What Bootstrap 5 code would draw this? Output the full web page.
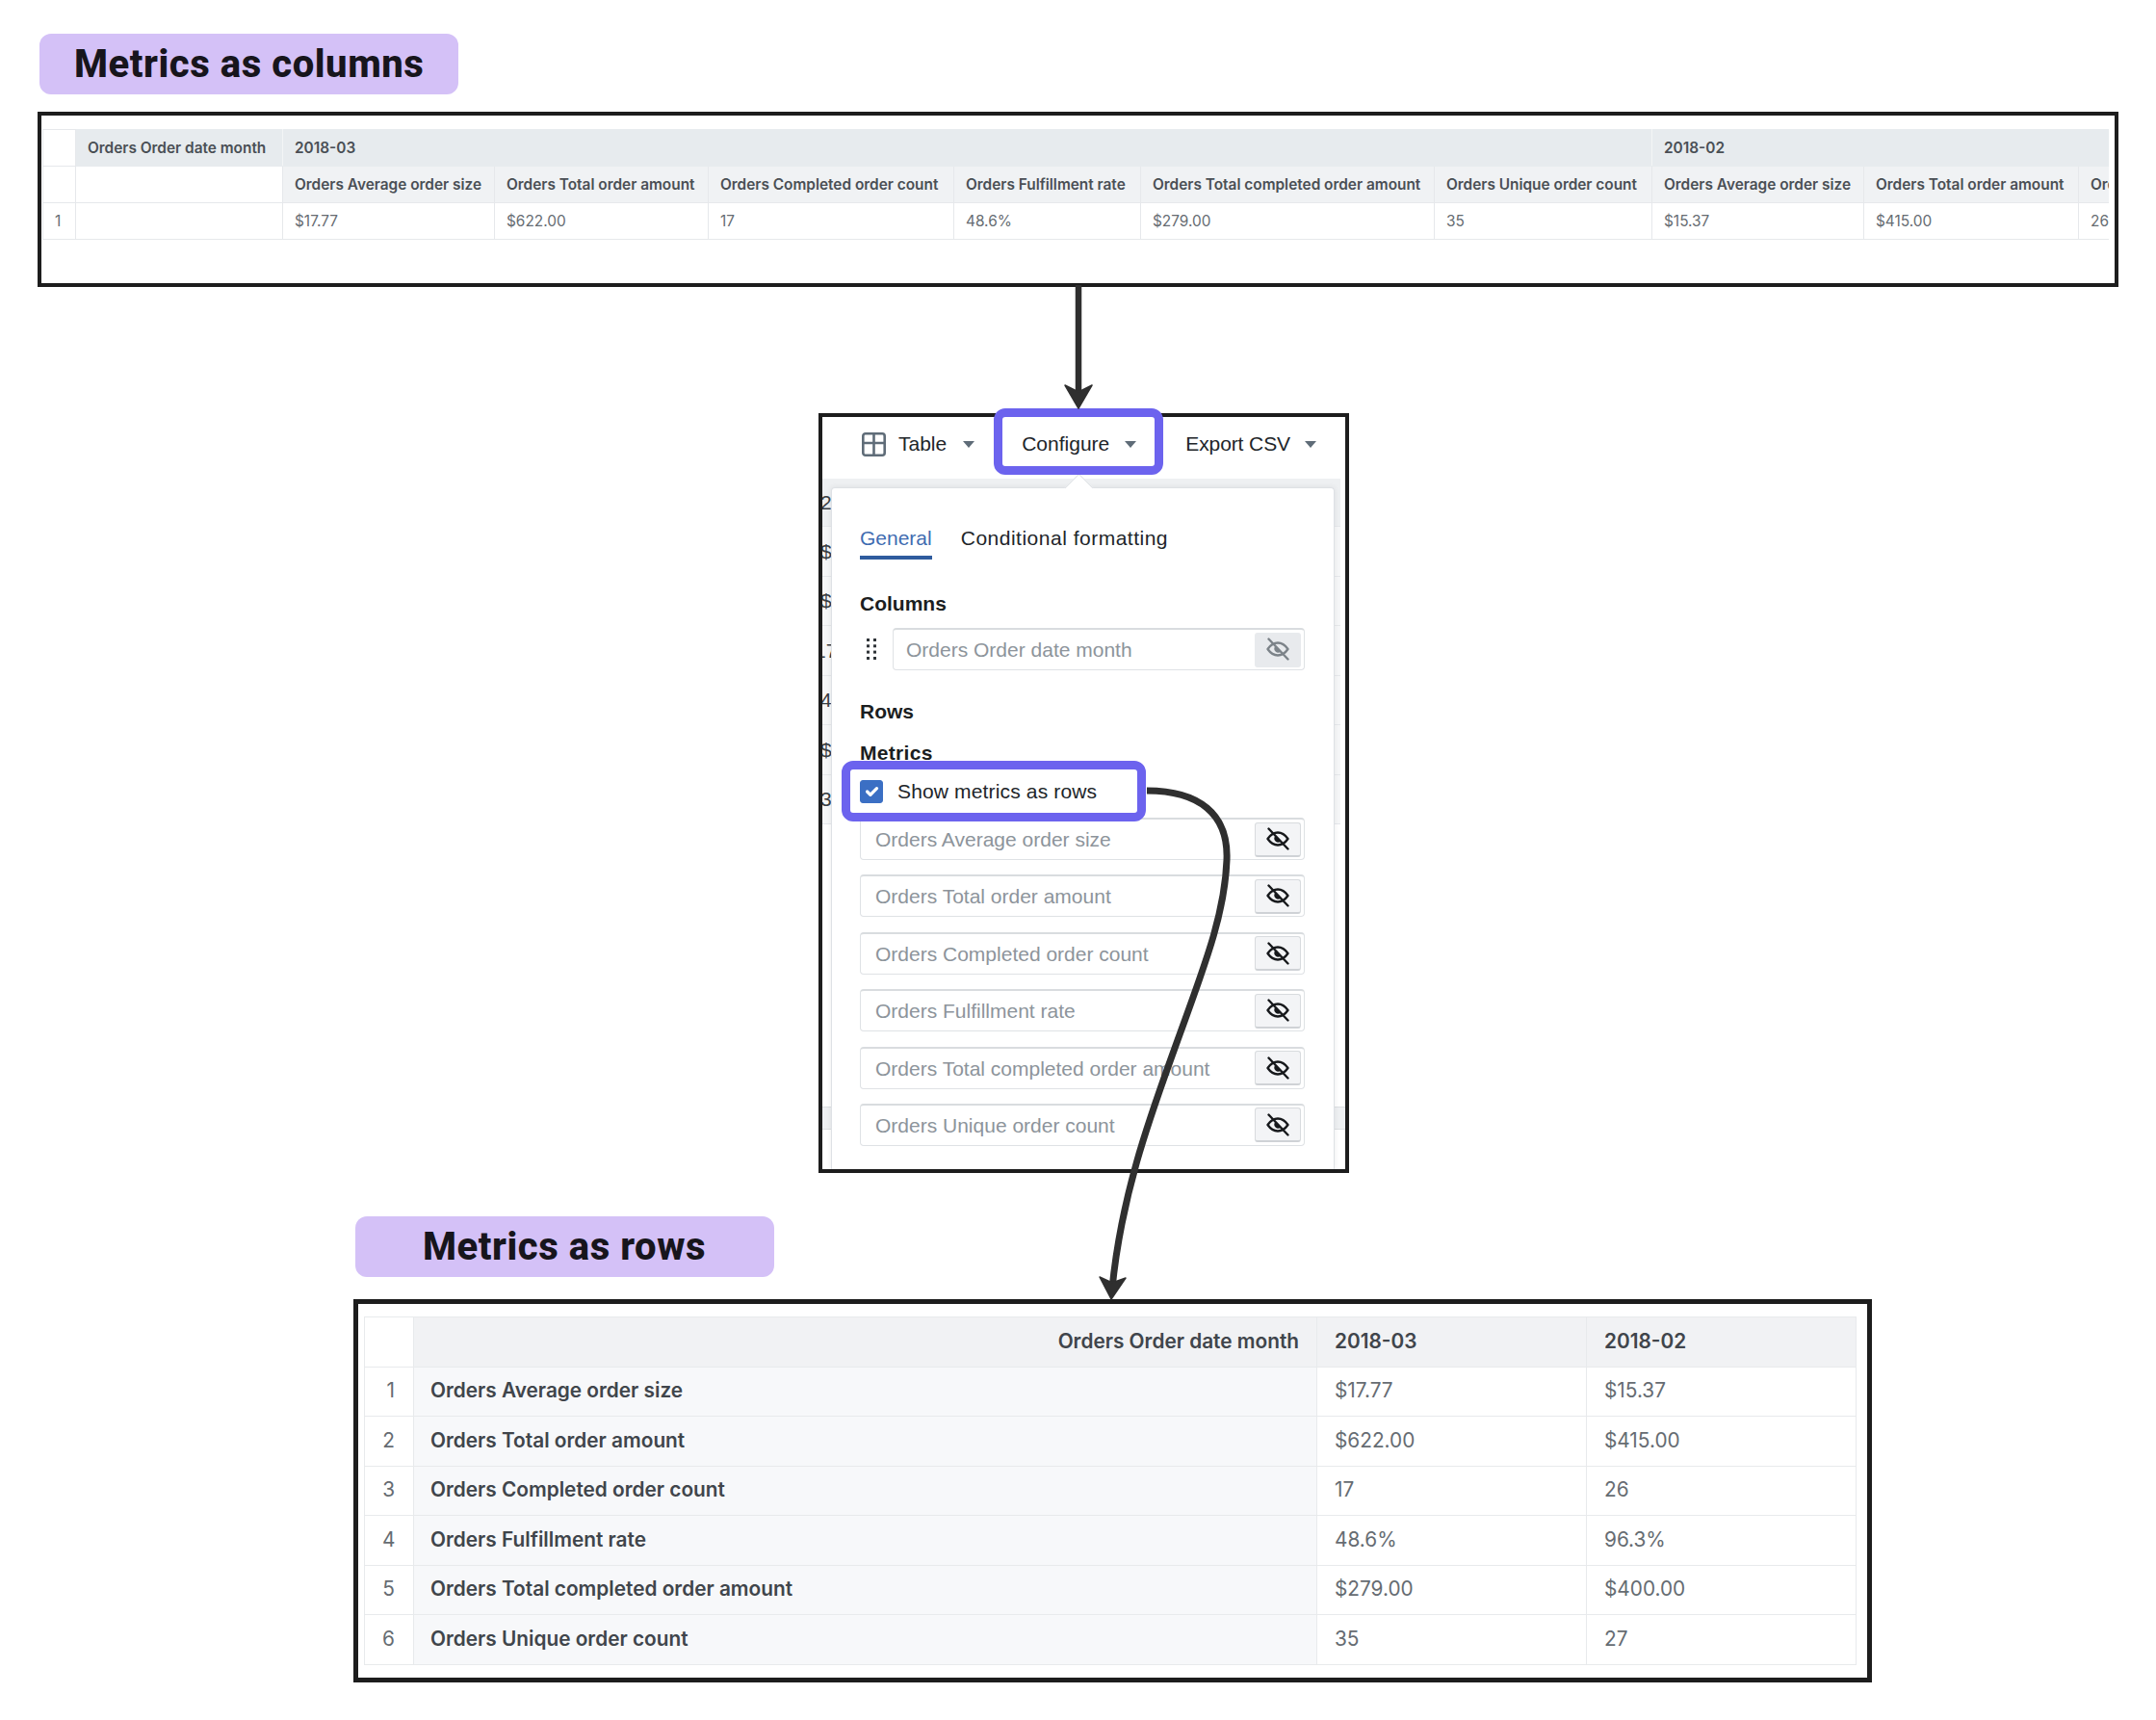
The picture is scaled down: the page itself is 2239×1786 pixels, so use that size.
<!doctype html>
<html lang="en">
<head>
<meta charset="utf-8">
<title>Metrics as columns and rows</title>
<link href="https://cdn.jsdelivr.net/npm/bootstrap@5.3.0/dist/css/bootstrap.min.css" rel="stylesheet">
<style>
html,body{margin:0;background:#fff}
.sheet{position:relative;width:2239px;height:1786px;overflow:hidden;padding-top:35px;font-family:"Liberation Sans",Arial,sans-serif;color:#212529}
.tag-head{display:flex;align-items:center;height:63px;padding-top:1px;background:#d4c1f7;border-radius:12px;font-family:Roboto,sans-serif;font-weight:800;letter-spacing:.55px;font-size:40px;color:#17151c;white-space:nowrap}
.tag-top{width:435px;margin-left:41px;padding-left:36px}
.tag-bottom{width:435px;margin-left:369px;margin-top:45px;padding-left:70px}
.frame{border:4px solid #1d1d1d;background:#fff}
.frame-top{width:2161px;height:182px;margin-left:39px;margin-top:18px;padding:14px 6px 0 1px}
.frame-mid{position:relative;width:551px;height:789px;margin-left:850px;margin-top:131px}
.frame-bottom{width:1577px;height:398px;margin-left:367px;margin-top:23px;padding:13px 0 0 6px;border-width:5px}
.clip{overflow:hidden}
.wide-grid.table,.tall-grid.table{table-layout:fixed;margin:0;font-family:Inter,sans-serif;border-collapse:collapse}
.wide-grid.table{width:2244px;font-size:15.4px}
.wide-grid.table>:not(caption)>*>*{height:38px;padding:1px 12px 0 12px;white-space:nowrap;overflow:hidden;border:1px solid #e6e8eb;background:#fff;color:#666c72;box-shadow:none;vertical-align:middle;line-height:1}
.wide-grid.table>:not(caption)>*>.head-a{background:#e7ebee;color:#4a4f55;font-weight:600;border-color:#e7ebee #f3f5f6}
.wide-grid.table>:not(caption)>*>.head-b{background:#f0f2f4;color:#4a4f55;font-weight:600}
.wide-grid .cw-0{width:34px}.wide-grid .cw-1{width:215px}.wide-grid .cw-2{width:220px}.wide-grid .cw-3{width:222px}.wide-grid .cw-4{width:255px}.wide-grid .cw-5{width:194px}.wide-grid .cw-6{width:305px}.wide-grid .cw-7{width:226px}.wide-grid .cw-8{width:220px}.wide-grid .cw-9{width:223px}.wide-grid .cw-10{width:130px}
.tall-grid.table{width:1549px;font-size:20.8px}
.tall-grid.table>:not(caption)>*>*{height:51.5px;padding:0 18px;white-space:nowrap;border:1px solid #e8eaec;background:#fff;color:#666c72;box-shadow:none;vertical-align:middle;line-height:1}
.tall-grid.table>:not(caption)>*>.num-cell{text-align:right;padding-right:19px}
.tall-grid.table>:not(caption)>*>.top-cell{background:#f1f2f4;color:#40454b;font-weight:600}
.tall-grid.table>:not(caption)>*>.label-cell{background:#f7f8fa;color:#40454b;font-weight:600;padding-left:17px}
.tall-grid .cw-a{width:51px}.tall-grid .cw-b{width:938px}.tall-grid .cw-c{width:280px}.tall-grid .cw-d{width:280px}
.tool-row{height:64px;font-size:21px;padding-left:41px;padding-bottom:8px}
.tool-label{line-height:24px}
.drop-caret{display:inline-block;width:0;height:0;border-left:6px solid transparent;border-right:6px solid transparent;border-top:7px solid #5f6c78;margin-left:17px}
.tool-hi .drop-caret{margin-left:16px}
.tool-last .drop-caret{margin-left:15px}
.tool-icon{width:25px;height:25px;margin-right:13px}
.tool-hi{position:relative;z-index:3;align-self:flex-start;display:flex;align-items:center;height:69px;margin:-9px 0 0 20px;padding:5px 19px 0 20px;border:9px solid #6c63ee;border-radius:12px;background:#fff}
.tool-last{margin-left:23px;letter-spacing:-.1px}
.under{height:717px;overflow:hidden;font-size:21px;color:#3a3f44}
.under-row{width:540px;height:51.5px;background:#f6f7f8;border-bottom:1px solid #e6e8eb;display:flex;align-items:center;margin-left:-2px;line-height:1}
.under-head{height:50px;background:#eef0f2}
.under-wide{padding-left:0;text-indent:-6px}
.under-gap{height:293px}
.under-band{height:24px;background:#eef0f2;border-top:1px solid #dcdfe2;border-bottom:1px solid #dcdfe2}
.pop-panel{position:absolute;left:9px;right:11px;top:73px;bottom:0;z-index:2;background:#fff;border:1px solid #dee1e5;border-bottom:0;border-radius:4px 4px 0 0;box-shadow:0 0 6px rgba(0,0,0,.08);padding:40px 0 0 29px;font-size:21px}
.pop-panel::before{content:"";position:absolute;left:246px;top:-11px;width:21px;height:21px;background:#fff;border-left:1px solid #dee1e5;border-top:1px solid #dee1e5;transform:rotate(45deg)}
.tab-row{gap:30px;height:34px}
.tab-row .nav-link{padding:0;height:34px;line-height:24px;color:#212529}
.tab-row .tab-wide{letter-spacing:.5px}
.tab-row .nav-link.active{color:#3f6cb1;border-bottom:4px solid #2f5c9e}
.sect-title{font-weight:700;line-height:24px;color:#1b1e21}
.sect-cols{margin-top:34px}
.sect-rows{margin-top:31px}
.sect-metrics{margin-top:19px;letter-spacing:.3px}
.drag-row{margin-top:13px}
.drag-dots{width:10px;height:22px;margin:0 17px 0 7px}
.field{display:flex;align-items:center;justify-content:space-between;height:44px;background:#fff;border:1px solid #dfe2e5;border-top:2px solid #d9dcdf;border-radius:4px;padding:0 3px 0 15px;color:#8d949b;line-height:1}
.field-a{width:428px;padding-left:13px}
.field-b{width:462px}
.eye-btn{display:flex;align-items:center;justify-content:center;width:48px;height:36px;padding:0;background:#f3f4f6;border:1px solid #d8dbde;border-bottom:2px solid #cfd2d6;border-radius:3px;color:#17191c}
.eye-off{background:#e8eaed;border-color:#e8eaed;color:#7c8389}
.eye-btn svg{width:24px;height:24px}
.check-hi{position:relative;z-index:3;display:flex;align-items:center;width:316px;height:63px;margin:-4px 0 -4px -19px;padding-left:10px;border:9px solid #6c63ee;border-radius:12px;background:#fff;letter-spacing:.15px}
.check-hi .form-check-input{width:24px;height:24px;margin:0 15px 0 0;background-color:#3b6fc4;border-color:#3b6fc4;border-radius:3px;flex:none}
.field-stack{gap:15.4px}
.overlay-art{position:absolute;left:0;top:0;width:2239px;height:1786px;z-index:5;pointer-events:none}
</style>
</head>
<body>
<svg width="0" height="0" class="d-block">
<defs>
<symbol id="eye-slash" viewBox="0 0 24 24">
<path d="M1.500 12C5 7 8.500 5.500 12 5.500S19 7 22.500 12C19 17 15.500 18.500 12 18.500S5 17 1.500 12Z" fill="none" stroke="currentColor" stroke-width="2.400" stroke-linejoin="round"/>
<path d="M9.200 9.200A4 4 0 0 0 14.800 14.800Z" fill="currentColor"/>
<path d="M2.500 1.500 22.500 22.500" fill="none" stroke="currentColor" stroke-width="2.400" stroke-linecap="round"/>
</symbol>
</defs>
</svg>
<div class="sheet">
  <div class="tag-head tag-top">Metrics as columns</div>

  <div class="frame frame-top">
    <div class="clip">
      <table class="table wide-grid">
        <colgroup><col class="cw-0"><col class="cw-1"><col class="cw-2"><col class="cw-3"><col class="cw-4"><col class="cw-5"><col class="cw-6"><col class="cw-7"><col class="cw-8"><col class="cw-9"><col class="cw-10"></colgroup>
        <thead>
          <tr><th></th><th class="head-a">Orders Order date month</th><th class="head-a" colspan="6">2018-03</th><th class="head-a" colspan="3">2018-02</th></tr>
          <tr><th></th><th></th><th class="head-b">Orders Average order size</th><th class="head-b">Orders Total order amount</th><th class="head-b">Orders Completed order count</th><th class="head-b">Orders Fulfillment rate</th><th class="head-b">Orders Total completed order amount</th><th class="head-b">Orders Unique order count</th><th class="head-b">Orders Average order size</th><th class="head-b">Orders Total order amount</th><th class="head-b">Orders Completed order count</th></tr>
        </thead>
        <tbody>
          <tr><td>1</td><td></td><td>$17.77</td><td>$622.00</td><td>17</td><td>48.6%</td><td>$279.00</td><td>35</td><td>$15.37</td><td>$415.00</td><td>26</td></tr>
        </tbody>
      </table>
    </div>
  </div>

  <div class="frame frame-mid">
    <div class="d-flex align-items-center tool-row">
      <svg class="tool-icon" viewBox="0 0 25 25" fill="none" stroke="#5f6c78" stroke-width="2.600"><rect x="1.300" y="1.300" width="22.400" height="22.400" rx="2.500"/><path d="M1.300 11h22.400M12.500 1.300v22.400"/></svg>
      <span class="tool-label">Table</span><span class="drop-caret"></span>
      <div class="tool-hi"><span class="tool-label">Configure</span><span class="drop-caret"></span></div>
      <div class="d-flex align-items-center tool-last"><span class="tool-label">Export CSV</span><span class="drop-caret"></span></div>
    </div>
    <div class="under">
      <div class="under-row under-head">2</div>
      <div class="under-row">$</div>
      <div class="under-row">$</div>
      <div class="under-row under-wide">17</div>
      <div class="under-row">4</div>
      <div class="under-row">$</div>
      <div class="under-row">3</div>
      <div class="under-gap"></div>
      <div class="under-band"></div>
    </div>
    <div class="pop-panel">
      <ul class="nav tab-row">
        <li class="nav-item"><a class="nav-link active" href="#">General</a></li>
        <li class="nav-item"><a class="nav-link tab-wide" href="#">Conditional formatting</a></li>
      </ul>
      <div class="sect-title sect-cols">Columns</div>
      <div class="d-flex align-items-center drag-row">
        <svg class="drag-dots" viewBox="0 0 10 22" fill="#2f3438"><rect x="0" y="0" width="3" height="3"/><rect x="7" y="0" width="3" height="3"/><rect x="0" y="6.300" width="3" height="3"/><rect x="7" y="6.300" width="3" height="3"/><rect x="0" y="12.600" width="3" height="3"/><rect x="7" y="12.600" width="3" height="3"/><rect x="0" y="19" width="3" height="3"/><rect x="7" y="19" width="3" height="3"/></svg>
        <div class="field field-a"><span>Orders Order date month</span><button class="btn eye-btn eye-off" type="button" aria-label="Show"><svg><use href="#eye-slash"/></svg></button></div>
      </div>
      <div class="sect-title sect-rows">Rows</div>
      <div class="sect-title sect-metrics">Metrics</div>
      <div class="check-hi"><input class="form-check-input" type="checkbox" checked aria-label="Show metrics as rows"><span>Show metrics as rows</span></div>
      <div class="d-flex flex-column field-stack">
        <div class="field field-b"><span>Orders Average order size</span><button class="btn eye-btn" type="button" aria-label="Hide"><svg><use href="#eye-slash"/></svg></button></div>
        <div class="field field-b"><span>Orders Total order amount</span><button class="btn eye-btn" type="button" aria-label="Hide"><svg><use href="#eye-slash"/></svg></button></div>
        <div class="field field-b"><span>Orders Completed order count</span><button class="btn eye-btn" type="button" aria-label="Hide"><svg><use href="#eye-slash"/></svg></button></div>
        <div class="field field-b"><span>Orders Fulfillment rate</span><button class="btn eye-btn" type="button" aria-label="Hide"><svg><use href="#eye-slash"/></svg></button></div>
        <div class="field field-b"><span>Orders Total completed order amount</span><button class="btn eye-btn" type="button" aria-label="Hide"><svg><use href="#eye-slash"/></svg></button></div>
        <div class="field field-b"><span>Orders Unique order count</span><button class="btn eye-btn" type="button" aria-label="Hide"><svg><use href="#eye-slash"/></svg></button></div>
      </div>
    </div>
  </div>

  <div class="tag-head tag-bottom">Metrics as rows</div>

  <div class="frame frame-bottom">
    <table class="table tall-grid">
      <colgroup><col class="cw-a"><col class="cw-b"><col class="cw-c"><col class="cw-d"></colgroup>
      <thead>
        <tr><th></th><th class="top-cell text-end">Orders Order date month</th><th class="top-cell">2018-03</th><th class="top-cell">2018-02</th></tr>
      </thead>
      <tbody>
        <tr><td class="num-cell">1</td><td class="label-cell">Orders Average order size</td><td>$17.77</td><td>$15.37</td></tr>
        <tr><td class="num-cell">2</td><td class="label-cell">Orders Total order amount</td><td>$622.00</td><td>$415.00</td></tr>
        <tr><td class="num-cell">3</td><td class="label-cell">Orders Completed order count</td><td>17</td><td>26</td></tr>
        <tr><td class="num-cell">4</td><td class="label-cell">Orders Fulfillment rate</td><td>48.6%</td><td>96.3%</td></tr>
        <tr><td class="num-cell">5</td><td class="label-cell">Orders Total completed order amount</td><td>$279.00</td><td>$400.00</td></tr>
        <tr><td class="num-cell">6</td><td class="label-cell">Orders Unique order count</td><td>35</td><td>27</td></tr>
      </tbody>
    </table>
  </div>

  <svg class="overlay-art" viewBox="0 0 2239 1786" fill="none">
    <path d="M1120 296V412" stroke="#2f2f2f" stroke-width="6.500"/>
    <path d="M1106 400 1120 424 1134 400 1120 407Z" fill="#2f2f2f" stroke="#2f2f2f" stroke-width="1.500" stroke-linejoin="round"/>
    <path d="M1191 821C1245 821 1276 845 1274 893 1272 950 1250 1005 1223 1080 1198 1150 1165 1235 1155 1338" stroke="#2f2f2f" stroke-width="7"/>
    <path d="M1142 1326 1154 1349 1169 1327 1155 1332Z" fill="#2f2f2f" stroke="#2f2f2f" stroke-width="1.500" stroke-linejoin="round"/>
  </svg>
</div>
</body>
</html>
